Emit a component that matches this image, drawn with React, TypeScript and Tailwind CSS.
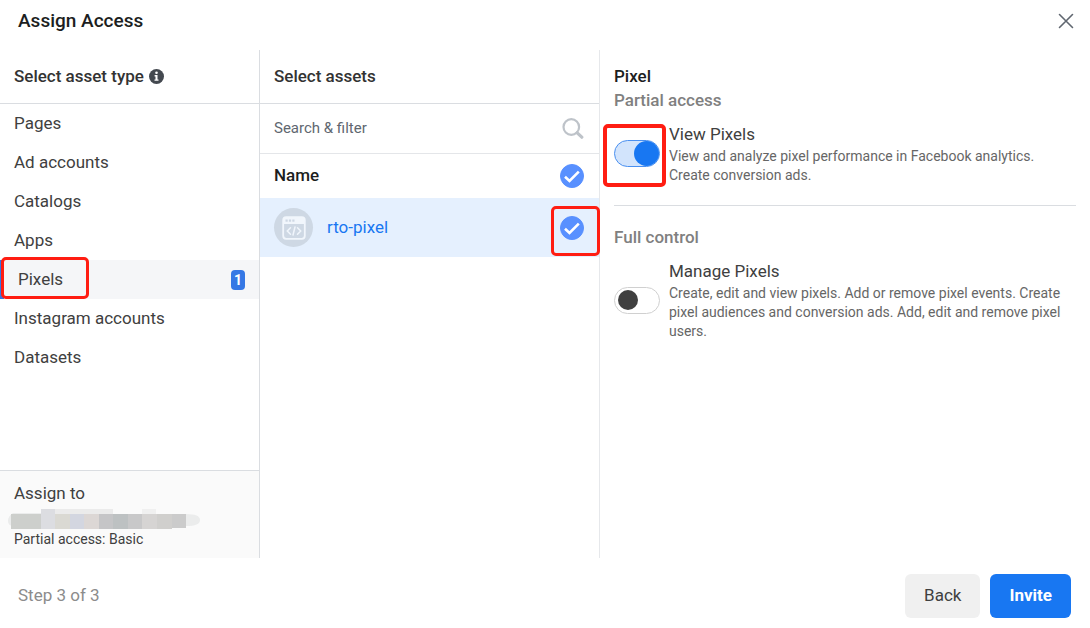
import React, { useState } from 'react';
import clsx from 'clsx';

interface AssetType {
  id: string;
  label: string;
}

const ASSET_TYPES: AssetType[] = [
  { id: 'pages', label: 'Pages' },
  { id: 'ad-accounts', label: 'Ad accounts' },
  { id: 'catalogs', label: 'Catalogs' },
  { id: 'apps', label: 'Apps' },
  { id: 'pixels', label: 'Pixels' },
  { id: 'instagram', label: 'Instagram accounts' },
  { id: 'datasets', label: 'Datasets' },
];

// x, y, width, height, fill of each block over the hidden user name
const REDACTED_BLOCKS: [number, number, number, number, string][] = [
  [3, 6, 30, 15, '#cdcfcc'],
  [33, 1, 14, 20, '#dcdde1'],
  [47, 1, 58, 5, '#ebebeb'],
  [47, 6, 15, 15, '#dad9d3'],
  [62, 6, 14, 15, '#d3d6e0'],
  [76, 6, 15, 15, '#dcd7d5'],
  [91, 6, 14, 15, '#c5c5c7'],
  [105, 6, 15, 15, '#bdc1c2'],
  [120, 6, 14, 15, '#c8c8c9'],
  [134, 1, 14, 5, '#f0f0f0'],
  [134, 6, 15, 15, '#d6d4d3'],
  [149, 6, 15, 15, '#d0cfcd'],
  [164, 6, 14, 14, '#cbcbcb'],
];

function Highlight({ className }: { className: string }) {
  return (
    <span
      aria-hidden="true"
      className={clsx(
        'pointer-events-none absolute z-10 rounded-[5px] border-[#ff1d12]',
        className
      )}
    />
  );
}

function InfoIcon() {
  return (
    <svg width="15" height="15" viewBox="0 0 15 15" aria-hidden="true">
      <circle cx="7.5" cy="7.5" r="7.5" fill="#444950" />
      <circle cx="7.5" cy="3.7" r="1.3" fill="#fff" />
      <path d="M5.6 6h2.9v4.4h1v1.4h-4v-1.4h1V7.4h-.9z" fill="#fff" />
    </svg>
  );
}

function CloseIcon() {
  return (
    <svg width="16" height="16" viewBox="0 0 16 16" aria-hidden="true">
      <path
        d="M1.5 1.5l13 13M14.5 1.5l-13 13"
        stroke="#606770"
        strokeWidth="1.6"
        strokeLinecap="round"
      />
    </svg>
  );
}

function SearchIcon() {
  return (
    <svg
      width="22"
      height="22"
      viewBox="0 0 22 22"
      fill="none"
      stroke="#bec3c9"
      aria-hidden="true"
    >
      <circle cx="9.3" cy="9" r="7.8" strokeWidth="2.2" />
      <path d="M15.2 14.8l4.6 4.4" strokeWidth="3.2" strokeLinecap="round" />
    </svg>
  );
}

function PixelIcon() {
  return (
    <span className="flex size-[39px] shrink-0 items-center justify-center rounded-full bg-[#ced8e4]">
      <svg width="24" height="24" viewBox="0 0 24 24" fill="none" aria-hidden="true">
        <rect x="1.2" y="1.2" width="21.6" height="21.6" rx="3" stroke="#f1f6fc" strokeWidth="1.8" />
        <path d="M1.2 8V4a3 3 0 0 1 3-3h15.6a3 3 0 0 1 3 3v4z" fill="#f1f6fc" />
        <g fill="#ced8e4">
          <rect x="3.5" y="3.5" width="2.2" height="2.2" />
          <rect x="6.9" y="3.5" width="2.2" height="2.2" />
          <rect x="10.3" y="3.5" width="2.2" height="2.2" />
        </g>
        <path
          d="M8.5 11.8L5.3 15l3.2 3.2M15.5 11.8l3.2 3.2-3.2 3.2M13 11l-2 8"
          stroke="#f1f6fc"
          strokeWidth="1.5"
          strokeLinecap="round"
        />
      </svg>
    </span>
  );
}

interface CheckProps {
  label: string;
  checked: boolean;
  onChange: (checked: boolean) => void;
}

function RoundCheckbox({ label, checked, onChange }: CheckProps) {
  return (
    <span className="relative flex size-6">
      <input
        type="checkbox"
        aria-label={label}
        checked={checked}
        onChange={e => onChange(e.target.checked)}
        className="size-6 cursor-pointer appearance-none rounded-full border border-[#bec3c9] bg-white checked:border-[#5890ff] checked:bg-[#5890ff]"
      />
      {checked && (
        <svg
          className="pointer-events-none absolute inset-0"
          width="24"
          height="24"
          viewBox="0 0 24 24"
          fill="none"
          aria-hidden="true"
        >
          <path d="M5 12.8l4.5 4.2L18.8 7.600" stroke="#fff" strokeWidth="2.6" />
        </svg>
      )}
    </span>
  );
}

interface PermissionProps {
  id: string;
  title: string;
  description: string;
  checked: boolean;
  onChange: (checked: boolean) => void;
  highlighted?: boolean;
}

function Permission({
  id,
  title,
  description,
  checked,
  onChange,
  highlighted,
}: PermissionProps) {
  return (
    <div className="flex items-center gap-[9px]">
      <span className="relative flex shrink-0">
        <input
          id={id}
          type="checkbox"
          role="switch"
          checked={checked}
          onChange={e => onChange(e.target.checked)}
          aria-describedby={`${id}-description`}
          className="flex h-[27px] w-[46px] cursor-pointer appearance-none items-center rounded-full border border-[#d0d0d0] bg-white px-[3px] before:size-5 before:rounded-full before:bg-[#404040] checked:justify-end checked:border-[#4a90f0] checked:bg-[#d2e4fc] checked:px-0 checked:before:size-[25px] checked:before:bg-[#1877f2]"
        />
        {highlighted && (
          <Highlight className="-top-4 -right-[6px] -bottom-5 -left-[11px] border-4" />
        )}
      </span>
      <div className="min-w-0 flex-1">
        <label htmlFor={id} className="block text-[17px] leading-[25px] text-[#404040]">
          {title}
        </label>
        <p id={`${id}-description`} className="text-sm leading-[19px] text-[#666]">
          {description}
        </p>
      </div>
    </div>
  );
}

export default function App() {
  const [selectedType, setSelectedType] = useState('pixels');
  const [assetSelected, setAssetSelected] = useState(true);
  const [query, setQuery] = useState('');
  const [viewPixels, setViewPixels] = useState(true);
  const [managePixels, setManagePixels] = useState(false);

  return (
    <div className="flex min-h-screen flex-col bg-white font-['Roboto',sans-serif] text-[#404040]">
      <header className="flex h-[50px] items-center justify-between pr-4 pb-2 pl-[18px]">
        <h1 className="text-[19px] font-medium text-[#1c1e21]">Assign Access</h1>
        <button type="button" aria-label="Close">
          <CloseIcon />
        </button>
      </header>

      <main className="flex flex-1">
        {/* Asset types */}
        <section className="flex w-[260px] shrink-0 flex-col border-r border-[#dadde1]">
          <div className="flex h-[54px] items-center gap-[5px] border-b border-[#dadde1] px-[14px]">
            <h2 className="text-[17px] font-medium text-[#333]">Select asset type</h2>
            <InfoIcon />
          </div>
          <ul>
            {ASSET_TYPES.map(type => {
              const selected = type.id === selectedType;
              return (
                <li key={type.id} className="relative">
                  <button
                    type="button"
                    aria-pressed={selected}
                    onClick={() => setSelectedType(type.id)}
                    className={clsx(
                      'flex h-[39px] w-full items-center justify-between pr-[14px] pl-[14px] text-[17px]',
                      selected && 'border-l-4 border-[#3578e5] bg-[#f5f6f8]'
                    )}
                  >
                    {type.label}
                    {type.id === 'pixels' && assetSelected && (
                      <span className="rounded-sm bg-[#3578e5] px-[3px] text-sm leading-5 font-bold text-white">
                        1
                      </span>
                    )}
                  </button>
                  {type.id === 'pixels' && (
                    <Highlight className="-top-[3px] left-px h-[42px] w-[88px] border-3" />
                  )}
                </li>
              );
            })}
          </ul>
          <div className="mt-auto border-t border-[#dadde1] bg-[#fafafa] px-[14px] py-[10px]">
            <p className="text-[17px] leading-6">Assign to</p>
            <svg
              className="mt-[3px] -ml-[6px] block"
              width="192"
              height="22"
              viewBox="0 0 192 22"
              role="img"
              aria-label="Hidden user name"
            >
              <path
                d="M0 13q0-5 5-8h28l8-4h64v5h73q14 0 14 6t-14 6H4q-4-1-4-5z"
                fill="#ebecec"
              />
              {REDACTED_BLOCKS.map(([x, y, width, height, fill]) => (
                <rect key={`${x}-${y}`} x={x} y={y} width={width} height={height} fill={fill} />
              ))}
            </svg>
            <p className="text-sm leading-[18px]">Partial access: Basic</p>
          </div>
        </section>

        {/* Assets */}
        <section className="flex w-[340px] shrink-0 flex-col border-r border-[#e6e8eb]">
          <div className="flex h-[54px] items-center border-b border-[#dadde1] px-[14px]">
            <h2 className="text-[17px] font-medium text-[#333]">Select assets</h2>
          </div>
          <div className="flex h-[50px] items-center border-b border-[#e4e6e9] pr-[15px] pl-[14px]">
            <input
              type="text"
              aria-label="Search and filter"
              placeholder="Search & filter"
              value={query}
              onChange={e => setQuery(e.target.value)}
              className="min-w-0 flex-1 text-[15px] outline-none placeholder:text-[#606770]"
            />
            <SearchIcon />
          </div>
          <div className="flex h-11 items-center justify-between pr-[15px] pl-[14px]">
            <h3 className="text-[17px] font-medium text-[#1c1e21]">Name</h3>
            <RoundCheckbox
              label="Select all assets"
              checked={assetSelected}
              onChange={setAssetSelected}
            />
          </div>
          <div
            className={clsx(
              'flex h-[59px] items-center pr-[15px] pl-[14px]',
              assetSelected && 'bg-[#e5f0fe]'
            )}
          >
            <PixelIcon />
            <a href="#rto-pixel" className="ml-[14px] flex-1 text-[17px] text-[#1877f2]">
              rto-pixel
            </a>
            <span className="relative">
              <RoundCheckbox
                label="rto-pixel"
                checked={assetSelected}
                onChange={setAssetSelected}
              />
              <Highlight className="-top-[10px] -bottom-4 -left-[9px] w-[49px] border-3" />
            </span>
          </div>
        </section>

        {/* Permissions */}
        <section className="min-w-0 flex-1 px-[14px] pt-[14px]">
          <h2 className="text-[17px] leading-6 font-medium text-[#1c1e21]">Pixel</h2>
          <h3 className="mb-[9px] text-[17px] leading-[25px] font-medium text-[#808080]">
            Partial access
          </h3>
          <Permission
            id="view-pixels"
            title="View Pixels"
            description="View and analyze pixel performance in Facebook analytics. Create conversion ads."
            checked={viewPixels}
            onChange={setViewPixels}
            highlighted
          />
          <hr className="mt-5 mb-[19px] border-[#dadde1]" />
          <h3 className="mb-[9px] text-[17px] leading-[25px] font-medium text-[#808080]">
            Full control
          </h3>
          <Permission
            id="manage-pixels"
            title="Manage Pixels"
            description="Create, edit and view pixels. Add or remove pixel events. Create pixel audiences and conversion ads. Add, edit and remove pixel users."
            checked={managePixels}
            onChange={setManagePixels}
          />
        </section>
      </main>

      <footer className="flex items-center justify-between pt-4 pr-[19px] pb-[10px] pl-[18px]">
        <p className="text-[17px] text-[#8c8c8c]">Step 3 of 3</p>
        <div className="flex gap-[10px]">
          <button type="button" className="h-11 rounded-md bg-[#f0f0f0] px-[19px] text-[17px]">
            Back
          </button>
          <button
            type="button"
            className="h-11 rounded-md bg-[#1877f2] px-[19px] text-[17px] font-bold text-white"
          >
            Invite
          </button>
        </div>
      </footer>
    </div>
  );
}
